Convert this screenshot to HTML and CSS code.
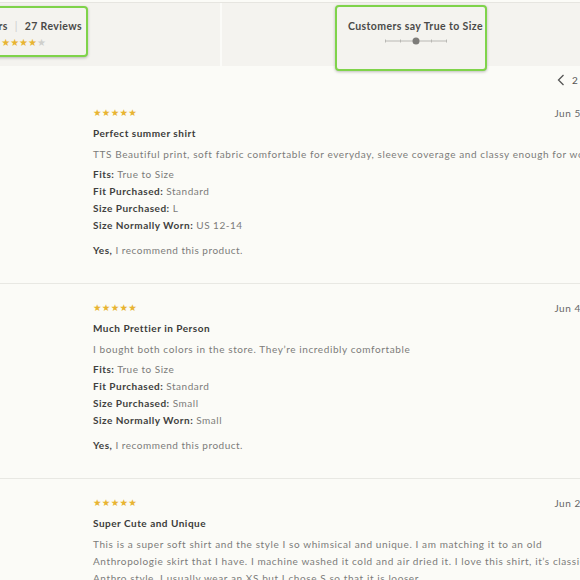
FILE: index.html
```html
<!DOCTYPE html>
<html lang="en">
<head>
<meta charset="utf-8">
<title>Reviews</title>
<link rel="stylesheet" href="styles.css">
</head>
<body>
<div class="page">
  <div class="summary">
    <div class="panel panel-rating">
      <div class="hl hl-rating">
        <div class="rating-line">4.5 Stars <span class="sep">|</span> 27 Reviews</div>
        <div class="stars stars-sum">★★★★<span class="off">★</span></div>
      </div>
    </div>
    <div class="panel panel-fit">
      <div class="hl hl-fit">
        <div class="fit-title">Customers say True to Size</div>
        <svg class="slider" width="62" height="8" viewBox="0 0 62 8">
          <line x1="0.5" y1="4" x2="61.5" y2="4" stroke="#b9b8b4" stroke-width="1"/>
          <line x1="0.5" y1="2.5" x2="0.5" y2="5.5" stroke="#b9b8b4" stroke-width="1"/>
          <line x1="15.5" y1="2.5" x2="15.5" y2="5.5" stroke="#b9b8b4" stroke-width="1"/>
          <line x1="46.5" y1="2.5" x2="46.5" y2="5.5" stroke="#b9b8b4" stroke-width="1"/>
          <line x1="61.5" y1="2.5" x2="61.5" y2="5.5" stroke="#b9b8b4" stroke-width="1"/>
          <circle cx="31" cy="4" r="3.5" fill="#7d7c79"/>
        </svg>
      </div>
    </div>
  </div>

  <div class="pager">
    <svg class="chev" width="8" height="12" viewBox="0 0 8 12"><path d="M6.5 1 L1.5 6 L6.5 11" fill="none" stroke="#555" stroke-width="1.3"/></svg>
    <span class="page-num">2</span>
  </div>

  <div class="reviews">
    <article class="review">
      <div class="review-head">
        <div class="stars">★★★★★</div>
        <div class="date">Jun 5</div>
      </div>
      <h3 class="title">Perfect summer shirt</h3>
      <p class="body">TTS Beautiful print, soft fabric comfortable for everyday, sleeve coverage and classy enough for work.</p>
      <ul class="details">
        <li><b>Fits:</b> True to Size</li>
        <li><b>Fit Purchased:</b> Standard</li>
        <li><b>Size Purchased:</b> L</li>
        <li><b>Size Normally Worn:</b> US 12-14</li>
      </ul>
      <p class="recommend"><b>Yes,</b> I recommend this product.</p>
    </article>

    <article class="review">
      <div class="review-head">
        <div class="stars">★★★★★</div>
        <div class="date">Jun 4</div>
      </div>
      <h3 class="title">Much Prettier in Person</h3>
      <p class="body">I bought both colors in the store. They’re incredibly comfortable</p>
      <ul class="details">
        <li><b>Fits:</b> True to Size</li>
        <li><b>Fit Purchased:</b> Standard</li>
        <li><b>Size Purchased:</b> Small</li>
        <li><b>Size Normally Worn:</b> Small</li>
      </ul>
      <p class="recommend"><b>Yes,</b> I recommend this product.</p>
    </article>

    <article class="review">
      <div class="review-head">
        <div class="stars">★★★★★</div>
        <div class="date">Jun 2</div>
      </div>
      <h3 class="title">Super Cute and Unique</h3>
      <p class="body">This is a super soft shirt and the style I so whimsical and unique. I am matching it to an old Anthropologie skirt that I have. I machine washed it cold and air dried it. I love this shirt, it’s classic Anthro style. I usually wear an XS but I chose S so that it is looser.</p>
    </article>
  </div>
</div>
</body>
</html>
```

FILE: styles.css
```css
html, body {
  margin: 0;
  padding: 0;
  overflow: hidden;
  background: #fbfbf7;
}

body {
  font-family: Lato, "Noto Sans", sans-serif;
  color: #333;
}

.page {
  width: 620px;
  padding-top: 2px;
}

.summary {
  display: flex;
  height: 63px;
  border-top: 1px solid #e6e5e0;
  background: #f4f3ef;
}

.panel {
  flex: none;
}

.panel-rating {
  width: 220px;
}

.panel-fit {
  flex: 1;
  border-left: 2px solid #fbfbf8;
}

.hl {
  box-sizing: border-box;
  border: 2.5px solid #7fd34a;
  border-radius: 4px;
  background: #f4f3ef;
  box-shadow: 0 1px 3px rgba(0, 0, 0, 0.25);
}

.hl-rating {
  margin: 3px 0 0 -40px;
  width: 128px;
  height: 51px;
  padding: 11px 4px 0 0;
  text-align: right;
}

.rating-line {
  font-size: 10.5px;
  font-weight: 700;
  line-height: 14px;
  letter-spacing: 0.4px;
  color: #4a4a48;
  white-space: nowrap;
}

.sep {
  color: #ccc;
  font-weight: 400;
  margin: 0 4px;
}

.stars {
  font-family: "DejaVu Sans", sans-serif;
  font-size: 9.5px;
  line-height: 12px;
  letter-spacing: 0.3px;
  color: #e8b431;
}

.stars-sum {
  margin-top: 5px;
  padding-right: 36px;
  font-size: 10px;
  line-height: 10px;
  letter-spacing: 0;
}

.stars .off {
  color: #cfcfcc;
}

.hl-fit {
  margin: 2px 0 0 113px;
  width: 152px;
  height: 66px;
  padding: 12px 0 0 11px;
  position: relative;
  z-index: 1;
}

.fit-title {
  font-size: 10.5px;
  font-weight: 700;
  line-height: 14px;
  letter-spacing: 0.4px;
  color: #4a4a48;
  white-space: nowrap;
}

.slider {
  display: block;
  margin: 4px 0 0 37px;
}

.pager {
  display: flex;
  justify-content: flex-end;
  align-items: center;
  gap: 7px;
  height: 18px;
  margin-top: 5px;
  padding-right: 42px;
}

.chev {
  display: block;
}

.page-num {
  font-size: 10px;
  color: #555;
  letter-spacing: 0.3px;
}

.review {
  padding: 18px 20px 24px 93px;
  border-bottom: 1px solid #e8e8e3;
}

.review:last-child {
  border-bottom: none;
}

.review-head {
  display: flex;
  justify-content: space-between;
  align-items: center;
}

.date {
  margin-right: 19px;
  font-size: 10px;
  line-height: 12px;
  letter-spacing: 0.6px;
  color: #666;
}

.title {
  margin: 7px 0 0;
  font-size: 10px;
  font-weight: 700;
  line-height: 14px;
  letter-spacing: 0.5px;
  color: #3b3b3a;
}

.body {
  margin: 6px 0 0;
  font-size: 10px;
  line-height: 17px;
  letter-spacing: 0.6px;
  color: #7c7c7a;
}

.details {
  list-style: none;
  margin: 3px 0 0;
  padding: 0;
  font-size: 10px;
  line-height: 17px;
  letter-spacing: 0.5px;
  color: #7c7c7a;
}

.details b,
.recommend b {
  font-weight: 700;
  color: #3f3f3e;
}

.recommend {
  margin: 8px 0 0;
  font-size: 10px;
  line-height: 17px;
  letter-spacing: 0.5px;
  color: #7c7c7a;
}
```
